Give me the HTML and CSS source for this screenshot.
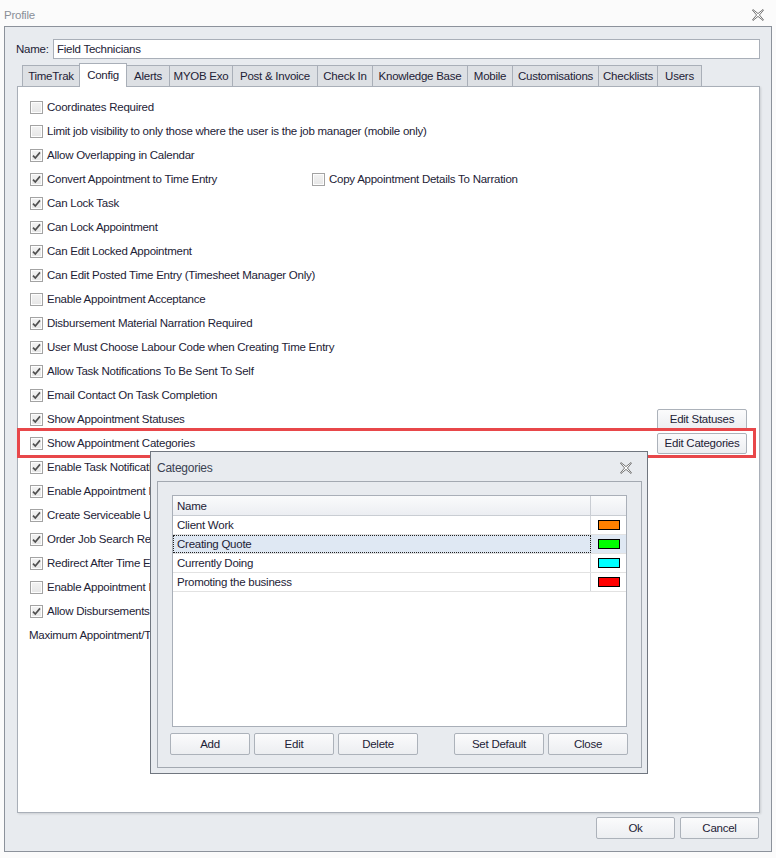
FILE: index.html
```html
<!DOCTYPE html>
<html lang="en">
<head>
    <meta charset="UTF-8">
    <title>Profile</title>
    <link rel="stylesheet" href="styles.css">
</head>
<body>

    <div class="titlebar">
        <span class="title">Profile</span>
        <svg class="close-x" width="12" height="12" viewBox="0 0 12 12"><polygon points="1,0.5 6,4.6 11,0.5 11.6,1.1 7.4,6 11.6,10.9 11,11.5 6,7.4 1,11.5 0.4,10.9 4.6,6 0.4,1.1" fill="#fff" stroke="#666" stroke-width="0.9"/></svg>
    </div>

    <div class="frame">
        <div class="name-row">
            <span class="name-label">Name:</span>
            <div class="text-input">Field Technicians</div>
        </div>

        <div class="tabs">
            <div class="tab" style="width:58px">TimeTrak</div>
            <div class="tab active" style="width:48px">Config</div>
            <div class="tab" style="width:44px">Alerts</div>
            <div class="tab" style="width:64px">MYOB Exo</div>
            <div class="tab" style="width:86px">Post &amp; Invoice</div>
            <div class="tab" style="width:56px">Check In</div>
            <div class="tab" style="width:96px">Knowledge Base</div>
            <div class="tab" style="width:46px">Mobile</div>
            <div class="tab" style="width:87px">Customisations</div>
            <div class="tab" style="width:60px">Checklists</div>
            <div class="tab" style="width:45px">Users</div>
        </div>

        <div class="panel" id="options"></div>

        <div class="footer">
            <button class="btn">Ok</button>
            <button class="btn">Cancel</button>
        </div>
    </div>

    <div class="dialog">
        <div class="dialog-title">
            <span>Categories</span>
            <svg class="close-x" width="12" height="12" viewBox="0 0 12 12"><polygon points="1,0.5 6,4.6 11,0.5 11.6,1.1 7.4,6 11.6,10.9 11,11.5 6,7.4 1,11.5 0.4,10.9 4.6,6 0.4,1.1" fill="#fff" stroke="#666" stroke-width="0.9"/></svg>
        </div>
        <div class="dialog-body">
            <div class="grid">
                <div class="grid-row grid-head">
                    <div class="cell-name">Name</div>
                    <div class="cell-colour"></div>
                </div>
                <div id="catRows"></div>
            </div>
            <div class="dialog-buttons">
                <button class="btn">Add</button>
                <button class="btn">Edit</button>
                <button class="btn">Delete</button>
                <button class="btn wide push">Set Default</button>
                <button class="btn">Close</button>
            </div>
        </div>
    </div>

    <script>
        let options = [
            { text: "Coordinates Required", on: false },
            { text: "Limit job visibility to only those where the user is the job manager (mobile only)", on: false },
            { text: "Allow Overlapping in Calendar", on: true },
            { text: "Convert Appointment to Time Entry", on: true, extra: { text: "Copy Appointment Details To Narration", on: false } },
            { text: "Can Lock Task", on: true },
            { text: "Can Lock Appointment", on: true },
            { text: "Can Edit Locked Appointment", on: true },
            { text: "Can Edit Posted Time Entry (Timesheet Manager Only)", on: true },
            { text: "Enable Appointment Acceptance", on: false },
            { text: "Disbursement Material Narration Required", on: true },
            { text: "User Must Choose Labour Code when Creating Time Entry", on: true },
            { text: "Allow Task Notifications To Be Sent To Self", on: true },
            { text: "Email Contact On Task Completion", on: true },
            { text: "Show Appointment Statuses", on: true, button: "Edit Statuses" },
            { text: "Show Appointment Categories", on: true, button: "Edit Categories", mark: true },
            { text: "Enable Task Notifications", on: true },
            { text: "Enable Appointment Notifications", on: true },
            { text: "Create Serviceable Units", on: true },
            { text: "Order Job Search Results", on: true },
            { text: "Redirect After Time Entry", on: true },
            { text: "Enable Appointment Reminders", on: false },
            { text: "Allow Disbursements On Tasks", on: true }
        ];

        let categories = [
            { name: "Client Work", colour: "#ff8000" },
            { name: "Creating Quote", colour: "#00ff00", selected: true },
            { name: "Currently Doing", colour: "#00ffff" },
            { name: "Promoting the business", colour: "#ff0000" }
        ];

        const tick = '<svg width="11" height="11" viewBox="0 0 11 11"><path d="M2 5.6 L4.3 8 L9 2.4" fill="none" stroke="#505050" stroke-width="1.7"/></svg>';

        function checkbox(item) {
            return `<span class="check">
                <span class="box">${item.on ? tick : ""}</span>
                <span>${item.text}</span>
            </span>`;
        }

        function renderOptions() {
            let panel = document.getElementById("options");
            options.forEach(opt => {
                let row = document.createElement("div");
                row.classList.add("opt-row");
                let html = checkbox(opt);
                if (opt.extra) html += `<span class="extra">${checkbox(opt.extra)}</span>`;
                if (opt.button) html += `<button class="btn side">${opt.button}</button>`;
                if (opt.mark) html += `<span class="highlight"></span>`;
                row.innerHTML = html;
                panel.appendChild(row);
            });
            let last = document.createElement("div");
            last.classList.add("opt-row", "plain");
            last.textContent = "Maximum Appointment/Time Entry Duration";
            panel.appendChild(last);
        }

        function renderCategories() {
            let list = document.getElementById("catRows");
            categories.forEach(cat => {
                let row = document.createElement("div");
                row.classList.add("grid-row");
                if (cat.selected) row.classList.add("selected");
                row.innerHTML = `
                    <div class="cell-name"><span>${cat.name}</span></div>
                    <div class="cell-colour"><span class="swatch" style="background:${cat.colour}"></span></div>
                `;
                list.appendChild(row);
            });
        }

        renderOptions();
        renderCategories();
    </script>

</body>
</html>
```

FILE: styles.css
```css
body {
    margin: 0;
    background: #fbfbfb;
    font-family: "Liberation Sans", Arial, sans-serif;
    font-size: 11.5px;
    letter-spacing: -0.25px;
    color: #1d2236;
    width: 776px;
    height: 858px;
    position: relative;
    overflow: hidden;
}
.titlebar {
    height: 26px;
    display: flex;
    align-items: center;
    justify-content: space-between;
    padding: 3px 12px 0 4px;
    box-sizing: border-box;
}
.title {
    color: #8a8f98;
}
.close-x {
    display: block;
}
.frame {
    margin-left: 4px;
    width: 768px;
    height: 826px;
    box-sizing: border-box;
    border: 1px solid #8c929b;
    background: #e8ebef;
    padding: 12px 0 0 0;
}
.name-row {
    display: flex;
    align-items: center;
    height: 20px;
}
.name-label {
    width: 48px;
    padding-left: 11px;
    box-sizing: border-box;
}
.text-input {
    width: 707px;
    height: 20px;
    box-sizing: border-box;
    border: 1px solid #a9afb8;
    background: #fff;
    padding: 3px 3px;
    line-height: 13px;
}
.tabs {
    display: flex;
    align-items: flex-end;
    height: 23px;
    margin-top: 4px;
    margin-left: 17px;
    position: relative;
    z-index: 1;
}
.tab {
    height: 21px;
    box-sizing: border-box;
    border: 1px solid #a9afb8;
    border-bottom: none;
    margin-right: -1px;
    background: #dde0e4;
    text-align: center;
    line-height: 20px;
    white-space: nowrap;
}
.tab.active {
    height: 24px;
    margin-bottom: -1px;
    background: #fff;
    line-height: 22px;
    position: relative;
    z-index: 2;
}
.panel {
    margin-left: 12px;
    width: 743px;
    height: 727px;
    box-sizing: border-box;
    border: 1px solid #a9afb8;
    background: #fff;
    padding: 8px 12px 0 12px;
    box-shadow: 1px 1px 2px rgba(0,0,0,0.12);
}
.opt-row {
    height: 24px;
    display: flex;
    align-items: center;
    position: relative;
    white-space: nowrap;
}
.opt-row.plain {
    margin-left: -1px;
}
.check {
    display: flex;
    align-items: center;
    white-space: nowrap;
}
.box {
    flex: none;
    width: 13px;
    height: 13px;
    box-sizing: border-box;
    border: 1px solid #a3a3a3;
    background: linear-gradient(#f3f3f3, #e6e6e6);
    box-shadow: inset 0 0 0 1px #fdfdfd;
    margin-right: 4px;
    display: flex;
    align-items: center;
    justify-content: center;
}
.box svg {
    display: block;
}
.extra {
    position: absolute;
    left: 282px;
}
.btn {
    font-family: inherit;
    font-size: 11.5px;
    letter-spacing: -0.25px;
    color: #1d2236;
    background: linear-gradient(#fbfbfc, #eceef1);
    border: 1px solid #acb2ba;
    border-radius: 2px;
    height: 22px;
    width: 80px;
    padding: 0;
    cursor: pointer;
}
.btn.side {
    margin-left: auto;
    width: 90px;
    height: 21px;
}
.highlight {
    position: absolute;
    left: -13px;
    top: -3px;
    width: 739px;
    height: 30px;
    box-sizing: border-box;
    border: 3px solid #e8474a;
    pointer-events: none;
}
.footer {
    display: flex;
    justify-content: flex-end;
    gap: 5px;
    margin-top: 4px;
    padding-right: 12px;
}
.footer .btn {
    width: 79px;
}

.dialog {
    position: absolute;
    left: 150px;
    top: 451px;
    width: 498px;
    height: 323px;
    box-sizing: border-box;
    border: 1px solid #70767f;
    background: #e8ebef;
    z-index: 5;
}
.dialog-title {
    height: 29px;
    display: flex;
    align-items: center;
    justify-content: space-between;
    padding: 3px 15px 0 6px;
    box-sizing: border-box;
    color: #3a4252;
    font-size: 12px;
}
.dialog-body {
    margin-left: 6px;
    width: 485px;
    height: 287px;
    box-sizing: border-box;
    border: 1px solid #a3a9b1;
    padding: 13px 0 0 0;
}
.grid {
    margin-left: 14px;
    width: 455px;
    height: 232px;
    box-sizing: border-box;
    border: 1px solid #a9afb8;
    background: #fff;
}
.grid-row {
    display: flex;
    height: 18px;
    border-bottom: 1px solid #e2e2e2;
}
.grid-head {
    height: 19px;
    border-bottom: 1px solid #c9cdd3;
    background: linear-gradient(#fafbfc, #eceef2);
}
.cell-name {
    flex: 1;
    display: flex;
    align-items: center;
    padding-left: 4px;
    border-right: 1px solid #d4d7dc;
}
.grid-head .cell-name {
    border-right: 1px solid #c9cdd3;
}
.cell-colour {
    width: 35px;
    display: flex;
    align-items: center;
    justify-content: center;
}
.selected {
    background: #dfe8f3;
}
.selected .cell-name {
    outline: 1px dotted #222;
    outline-offset: -1px;
}
.swatch {
    width: 22px;
    height: 10px;
    box-sizing: border-box;
    border: 1px solid #000;
}
.dialog-buttons {
    display: flex;
    gap: 4px;
    margin-top: 6px;
    margin-left: 12px;
}
.dialog-buttons .btn.wide {
    width: 90px;
}
.dialog-buttons .push {
    margin-left: 32px;
}
```
